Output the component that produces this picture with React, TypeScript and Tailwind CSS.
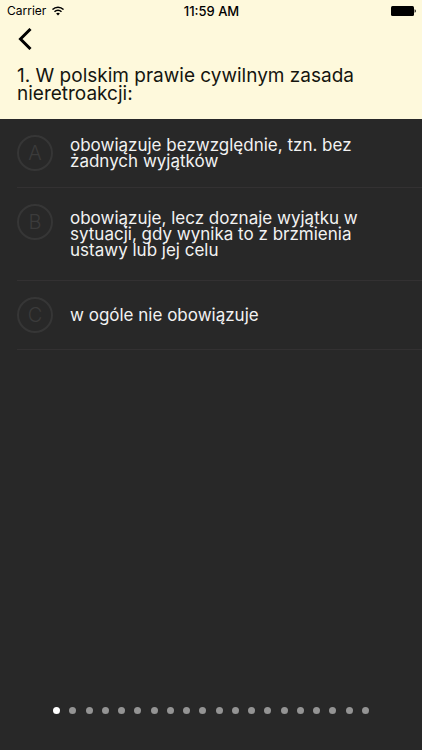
type Answer = {
  letter: string;
  text: string;
};

const answers: Answer[] = [
  { letter: 'A', text: 'obowiązuje bezwzględnie, tzn. bez żadnych wyjątków' },
  {
    letter: 'B',
    text: 'obowiązuje, lecz doznaje wyjątku w sytuacji, gdy wynika to z brzmienia ustawy lub jej celu',
  },
  { letter: 'C', text: 'w ogóle nie obowiązuje' },
];

const PAGE_COUNT = 20;
const LONG_ANSWER = 60;
const currentPage = 0;

function StatusBar() {
  return (
    <div className="grid h-5 grid-cols-3 items-center pt-[2px] pr-[6px] pl-[7px] text-[12px] leading-4">
      <div className="flex items-center gap-[6px]">
        <span>Carrier</span>
        <svg width="12" height="10" viewBox="0 0 12 10" fill="none" stroke="currentColor" strokeWidth="1.5" aria-hidden="true">
          <path d="M0.5 3.6C3.5 0.4 8.5 0.4 11.5 3.6" />
          <path d="M2.5 5.8C4.5 3.7 7.5 3.7 9.5 5.8" />
          <path d="M6 9.6L4.1 7.6C5.1 6.5 6.9 6.5 7.9 7.6Z" fill="currentColor" stroke="none" />
        </svg>
      </div>
      <span className="text-center text-[13px] font-medium whitespace-nowrap">11:59 AM</span>
      <svg className="justify-self-end" width="25" height="10" viewBox="0 0 25 10" fill="currentColor" aria-hidden="true">
        <rect width="23" height="10" rx="1.5" />
        <path d="M23.6 3.3C25.2 3.8 25.2 6.2 23.6 6.7Z" />
      </svg>
    </div>
  );
}

function AnswerRow({ letter, text }: Answer) {
  // long answers get more room above and below
  const padding = text.length > LONG_ANSWER ? 'py-[22px]' : 'py-4';

  return (
    <li className="ml-[17px] border-b border-[#333132]">
      <button type="button" className="flex w-full items-start gap-[17px] pr-12 text-left">
        <span className="my-4 flex size-9 shrink-0 items-center justify-center rounded-full border-2 border-[#363636] text-[20px] font-light text-[#3b3b3b]">
          {letter}
        </span>
        <span className={`self-center text-[17px] leading-4 text-[#f2f2f2] ${padding}`}>{text}</span>
      </button>
    </li>
  );
}

export default function App() {
  return (
    <div className="flex min-h-screen flex-col bg-[#282828] font-['Inter',sans-serif]">
      <header className="bg-[#fef9dc] pb-4 text-black">
        <StatusBar />
        <button type="button" aria-label="Wstecz" className="ml-[18px] flex h-[37px] items-center">
          <svg width="15" height="22" viewBox="0 0 15 22" fill="none" stroke="currentColor" strokeWidth="3" aria-hidden="true">
            <path d="M12.5 1L2.5 11L12.5 21" />
          </svg>
        </button>
        <h1 className="mt-[10px] pr-12 pl-[17px] text-[19px] leading-[18px] text-[#15150f]">
          1. W polskim prawie cywilnym zasada nieretroakcji:
        </h1>
      </header>

      <main className="grow">
        <ul>
          {answers.map((answer) => (
            <AnswerRow key={answer.letter} {...answer} />
          ))}
        </ul>
      </main>

      <nav aria-label="Pytania" className="flex justify-between px-[53px] pb-9">
        {Array.from({ length: PAGE_COUNT }, (_, i) => (
          <button
            key={i}
            type="button"
            aria-label={`Pytanie ${i + 1}`}
            className={`size-[7px] rounded-full ${i === currentPage ? 'bg-white' : 'bg-[#949494]'}`}
          />
        ))}
      </nav>
    </div>
  );
}
